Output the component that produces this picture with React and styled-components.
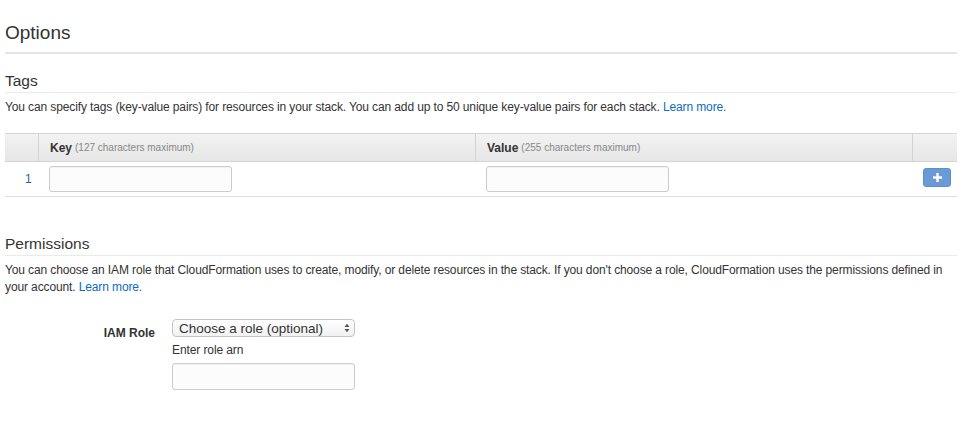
import React from "react";
import styled, { createGlobalStyle } from "styled-components";

const Global = createGlobalStyle`
  html, body { margin: 0; padding: 0; background: #fff; }
  body { font-family: "Liberation Sans", Arial, sans-serif; color: #333; }
`;

const Page = styled.div`
  width: 952px;
  margin-left: 5px;
  padding-top: 18px;
`;

const PageTitle = styled.h1`
  margin: 0;
  font-size: 19px;
  font-weight: normal;
  line-height: 30px;
  color: #333;
  padding-bottom: 4px;
  border-bottom: 2px solid #e5e5e5;
`;

const Section = styled.section`
  margin-top: ${(p) => p.$top}px;
`;

const SectionTitle = styled.h2`
  margin: 0;
  font-size: 15.5px;
  font-weight: normal;
  line-height: 20px;
  color: #333;
  padding-bottom: 1px;
  border-bottom: 1px solid #eaeaea;
`;

const Text = styled.p`
  margin: 6px 0 0;
  font-size: 12px;
  letter-spacing: -0.12px;
  line-height: 17px;
  color: #333;
`;

const Link = styled.a`
  color: #0d6bc6;
  text-decoration: none;
`;

const Table = styled.div`
  margin-top: 17px;
  border-top: 1px solid #d5d5d5;
  border-bottom: 1px solid #dcdcdc;
`;

const Row = styled.div`
  display: grid;
  grid-template-columns: 33px 437px 437px 1fr;
  height: ${(p) => p.$h}px;
  align-items: center;
`;

const HeaderRow = styled(Row)`
  background: linear-gradient(#f3f3f3, #e6e6e6);
  border-bottom: 1px solid #d5d5d5;
  align-items: stretch;
`;

const HeadCell = styled.div`
  display: flex;
  align-items: center;
  padding-left: 11px;
  border-left: ${(p) => (p.$first ? "none" : "1px solid #d3d3d3")};
  font-size: 12px;
`;

const HeadLabel = styled.span`
  font-weight: bold;
  color: #333;
  margin-right: 3px;
`;

const HeadHint = styled.span`
  font-size: 10px;
  color: #888;
`;

const Cell = styled.div`
  padding-left: ${(p) => p.$pl ?? 11}px;
  display: flex;
  justify-content: ${(p) => p.$justify || "flex-start"};
  align-items: center;
  padding-right: ${(p) => p.$pr ?? 0}px;
`;

const Index = styled.span`
  font-size: 12px;
  color: #1f5fa8;
  padding-left: 10px;
`;

const TextInput = styled.input`
  box-sizing: border-box;
  width: 183px;
  height: ${(p) => p.$h || 26}px;
  border: 1px solid #ccc;
  border-radius: 3px;
  background: #fcfcfc;
  box-shadow: inset 0 1px 1px rgba(0, 0, 0, 0.04);
  outline: none;
  font-family: inherit;
  font-size: 13px;
`;

const AddButton = styled.button`
  box-sizing: border-box;
  width: 28px;
  height: 19px;
  border: 1px solid #5d8fce;
  border-radius: 3px;
  background: #6b9bd6;
  display: flex;
  align-items: center;
  justify-content: center;
  padding: 0;
  cursor: pointer;
  margin-bottom: 4px;
`;

const FormRow = styled.div`
  display: grid;
  grid-template-columns: 150px 183px;
  column-gap: 17px;
  margin-top: 23px;
`;

const Label = styled.label`
  font-size: 12px;
  font-weight: bold;
  color: #333;
  text-align: right;
  padding-top: 7px;
`;

const Field = styled.div`
  display: flex;
  flex-direction: column;
`;

const Select = styled.div`
  box-sizing: border-box;
  height: 18px;
  border: 1px solid #c4c4c4;
  border-radius: 4px;
  background: linear-gradient(#ffffff, #f1f1f1);
  display: flex;
  align-items: center;
  justify-content: space-between;
  padding: 0 4px 0 6px;
  font-size: 13.5px;
  color: #333;
`;

const Hint = styled.div`
  font-size: 12px;
  letter-spacing: -0.1px;
  color: #333;
  margin: 6px 0 5px;
  line-height: 15px;
`;

export default function App() {
  return (
    <>
      <Global />
      <Page>
        <PageTitle>Options</PageTitle>
        <Section $top={17}>
          <SectionTitle>Tags</SectionTitle>
          <Text>
            You can specify tags (key-value pairs) for resources in your stack. You can add up to 50 unique key-value pairs for each stack.{" "}
            <Link href="#">Learn more.</Link>
          </Text>
          <Table>
            <HeaderRow $h={27}>
              <HeadCell $first />
              <HeadCell>
                <HeadLabel>Key</HeadLabel>
                <HeadHint>(127 characters maximum)</HeadHint>
              </HeadCell>
              <HeadCell>
                <HeadLabel>Value</HeadLabel>
                <HeadHint>(255 characters maximum)</HeadHint>
              </HeadCell>
              <HeadCell />
            </HeaderRow>
            <Row $h={34}>
              <Cell $pl={10}>
                <Index>1</Index>
              </Cell>
              <Cell>
                <TextInput />
              </Cell>
              <Cell>
                <TextInput />
              </Cell>
              <Cell $justify="flex-end" $pr={6}>
                <AddButton aria-label="Add">
                  <svg width="9" height="9" viewBox="0 0 9 9">
                    <rect x="3.3" y="0" width="2.4" height="9" fill="#fff" />
                    <rect x="0" y="3.3" width="9" height="2.4" fill="#fff" />
                  </svg>
                </AddButton>
              </Cell>
            </Row>
          </Table>
        </Section>
        <Section $top={37}>
          <SectionTitle>Permissions</SectionTitle>
          <Text>
            You can choose an IAM role that CloudFormation uses to create, modify, or delete resources in the stack. If you don't choose a role, CloudFormation uses the permissions defined in your account.{" "}
            <Link href="#">Learn more.</Link>
          </Text>
          <FormRow>
            <Label>IAM Role</Label>
            <Field>
              <Select>
                <span>Choose a role (optional)</span>
                <svg width="6" height="10" viewBox="0 0 6 10">
                  <path d="M0.5 4 L3 0.8 L5.5 4 Z" fill="#555" />
                  <path d="M0.5 6 L3 9.2 L5.5 6 Z" fill="#555" />
                </svg>
              </Select>
              <Hint>Enter role arn</Hint>
              <TextInput $h={27} />
            </Field>
          </FormRow>
        </Section>
      </Page>
    </>
  );
}
